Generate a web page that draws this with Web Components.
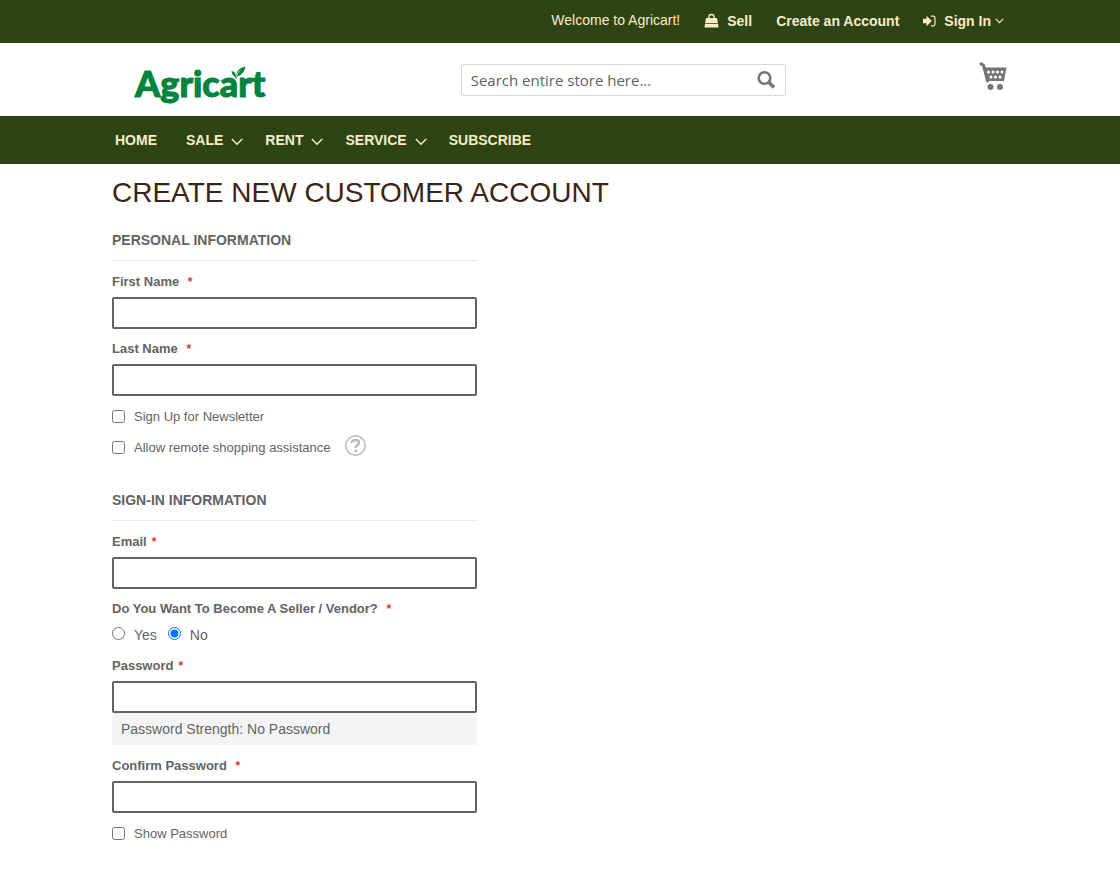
<!DOCTYPE html>
<html lang="en">

<head>
<meta charset="utf-8">
<title>Create New Customer Account</title>
<style>
    body {
        margin: 0;
        background: #fff;
        color: #636363;
        font: 14px/20px "Liberation Sans", Arial, sans-serif;
        --green: #2e4414;
        --cream: #f8ebc8;
        --side: 10%;
    }
</style>
</head>

<body>

    <top-bar>
        <top-link>Welcome to Agricart!</top-link>
        <top-link href="#sell" icon="bag">Sell</top-link>
        <top-link href="#create">Create an Account</top-link>
        <top-link href="#signin" icon="login" caret>Sign In</top-link>
    </top-bar>

    <store-header></store-header>

    <main-nav>
        <nav-item>HOME</nav-item>
        <nav-item menu>SALE</nav-item>
        <nav-item menu>RENT</nav-item>
        <nav-item menu>SERVICE</nav-item>
        <nav-item>SUBSCRIBE</nav-item>
    </main-nav>

    <account-page heading="CREATE NEW CUSTOMER ACCOUNT">
        <form-section heading="PERSONAL INFORMATION">
            <text-field label="First Name&nbsp;"></text-field>
            <text-field label="Last Name&nbsp;"></text-field>
            <check-field label="Sign Up for Newsletter"></check-field>
            <check-field label="Allow remote shopping assistance" help></check-field>
        </form-section>
        <form-section heading="SIGN-IN INFORMATION">
            <text-field label="Email" type="email"></text-field>
            <seller-choice></seller-choice>
            <text-field label="Password" type="password">
                <strength-meter>No Password</strength-meter>
            </text-field>
            <text-field label="Confirm Password&nbsp;" type="password"></text-field>
            <check-field label="Show Password"></check-field>
        </form-section>
    </account-page>

<script>

const ICONS = {
    bag: `<svg width="15" height="15" viewBox="0 0 15 15"><path d="M4.8 6.500V4.200a2.700 2.700 0 0 1 5.400 0V6.500" fill="none" stroke="currentColor" stroke-width="1.3"/><path d="M2 5h11l.9 5H1.1zM1 10.800h13l.5 3.700H.5z" fill="currentColor"/></svg>`,
    login: `<svg width="13" height="12" viewBox="0 0 13 12"><path d="M0 3.700h3.5V.8L8.800 6l-5.300 5.200V8.300H0z" fill="currentColor"/><path d="M8 1.2h2.2q1.8 0 1.8 1.8v6q0 1.8-1.8 1.8H8" fill="none" stroke="currentColor" stroke-width="1.2"/></svg>`
};

// Base class: renders the template once into an open shadow root
class BaseElement extends HTMLElement {
    constructor() {
        super();
        this.attachShadow({ mode: "open" });
    }

    connectedCallback() {
        this.shadowRoot.innerHTML = this.render();
    }

    attr(name) {
        return this.getAttribute(name) || "";
    }
}

class TopBar extends BaseElement {
    render() {
        return `
<style>
    :host {
        display: flex;
        justify-content: flex-end;
        align-items: center;
        gap: 24px;
        height: 41px;
        padding: 0 calc(var(--side) + 4px) 2px var(--side);
        background: var(--green);
        color: var(--cream);
    }
</style>
<slot></slot>`;
    }
}

class TopLink extends BaseElement {
    render() {
        const icon = ICONS[this.getAttribute("icon")] || "";
        const caret = this.hasAttribute("caret")
            ? `<svg class="caret" width="9" height="6" viewBox="0 0 9 6"><path d="M.7.8 4.5 4.6 8.3.8" fill="none" stroke="currentColor" stroke-width="1.2"/></svg>`
            : "";
        const tag = this.hasAttribute("href") ? `a href="${this.attr("href")}"` : "span";
        return `
<style>
    :host { display: block; white-space: nowrap; }
    a, span { display: flex; align-items: center; gap: 8px; color: inherit; text-decoration: none; }
    span { padding-bottom: 2px; }
    a { font-weight: bold; }
    .caret { margin-left: -4px; }
</style>
<${tag}>${icon}<slot></slot>${caret}</${tag.split(" ")[0]}>`;
    }
}

class StoreHeader extends BaseElement {
    render() {
        return `
<style>
    :host {
        display: flex;
        justify-content: space-between;
        align-items: center;
        height: 73px;
        padding: 0 var(--side);
    }
    .logo {
        position: relative;
        margin-left: 23px;
        padding: 6px 2px 0 0;
        color: #04843c;
        font: 900 36px/40px Lato, sans-serif;
        -webkit-text-stroke: 1px #04843c;
        text-decoration: none;
    }
    .leaf { position: absolute; left: 96px; top: 9px; }
    form {
        display: flex;
        align-items: center;
        box-sizing: border-box;
        width: 325px;
        height: 32px;
        padding: 0 9px;
        border: 1px solid #d8d8d8;
        border-radius: 2px;
    }
    input {
        flex: 1;
        min-width: 0;
        padding: 0;
        border: 0;
        outline: 0;
        font: 15px/20px "Open Sans", sans-serif;
    }
    input::placeholder { color: #5f5f5f; opacity: 1; }
    button { display: flex; padding: 0; border: 0; background: none; color: #757575; }
    .cart { display: flex; padding: 0 1px 6px 0; color: #757575; }
</style>
<a class="logo" href="#home">Agricart
    <svg class="leaf" width="16" height="14" viewBox="0 0 16 14"><path d="M.5 5q4 .5 4.500 5Q5.500 2 14.500.5 13 8.500 6.500 10.500L5 13Q4.500 11 2.500 9.500.800 8 .5 5z" fill="#04843c"/><path d="M5.200 11.500Q5.500 7.500 9 4.500" fill="none" stroke="#fff" stroke-width=".8"/></svg>
</a>
<form>
    <input type="text" aria-label="Search" placeholder="Search entire store here...">
    <button type="button" aria-label="Search">
        <svg width="20" height="20" viewBox="0 0 20 20"><circle cx="8.500" cy="8" r="5.800" fill="none" stroke="currentColor" stroke-width="2.600"/><path d="m12.500 12 5.500 5.500" stroke="currentColor" stroke-width="3.500"/></svg>
    </button>
</form>
<a class="cart" href="#cart" aria-label="My Cart">
    <svg width="28" height="29" viewBox="0 0 28 29">
        <path d="M2 1.900 4.500 3.400 8.500 19" fill="none" stroke="currentColor" stroke-width="3" stroke-linecap="round" stroke-linejoin="round"/>
        <path d="M5 5.500H27.500L25 19H8z" fill="currentColor"/>
        <g fill="#fff"><circle cx="9.500" cy="10" r="1.500"/><circle cx="14" cy="10" r="1.500"/><circle cx="18.500" cy="10" r="1.500"/><circle cx="23" cy="10" r="1.500"/><circle cx="12" cy="15" r="1.500"/><circle cx="16.500" cy="15" r="1.500"/><circle cx="21" cy="15" r="1.500"/></g>
        <g fill="currentColor"><circle cx="11.500" cy="25" r="3"/><circle cx="21" cy="25" r="3"/></g>
    </svg>
</a>`;
    }
}

class MainNav extends BaseElement {
    render() {
        return `
<style>
    :host { display: block; background: var(--green); color: #f3edc8; }
    nav {
        display: flex;
        align-items: center;
        gap: 29px;
        height: 48px;
        padding: 0 var(--side);
        margin-left: 3px;
    }
</style>
<nav><slot></slot></nav>`;
    }
}

class NavItem extends BaseElement {
    render() {
        const caret = this.hasAttribute("menu")
            ? `<svg width="12" height="8" viewBox="0 0 12 8"><path d="m.8 1 5.200 5.200L11.200 1" fill="none" stroke="currentColor" stroke-width="1.500"/></svg>`
            : "";
        return `
<style>
    :host { display: block; font-weight: bold; }
    a { display: flex; align-items: center; gap: 8px; color: inherit; text-decoration: none; }
    svg { margin: 3px -7px 0 0; }
</style>
<a href="#"><slot></slot>${caret}</a>`;
    }
}

class AccountPage extends BaseElement {
    render() {
        return `
<style>
    :host { display: block; padding: 14px var(--side) 32px; }
    h1 { margin: 0 0 22px; color: #3d2314; font-size: 28px; font-weight: normal; line-height: 30px; }
    form { display: flex; flex-direction: column; gap: 32px; max-width: 365px; }
</style>
<h1>${this.attr("heading")}</h1>
<form><slot></slot></form>`;
    }
}

class FormSection extends BaseElement {
    render() {
        return `
<style>
    :host { display: block; }
    h2 {
        margin: 0 0 11px;
        padding-bottom: 10px;
        border-bottom: 1px solid #ebebeb;
        font-size: 14px;
        line-height: 20px;
    }
    div { display: flex; flex-direction: column; gap: 10px; }
</style>
<h2>${this.attr("heading")}</h2>
<div><slot></slot></div>`;
    }
}

class TextField extends BaseElement {
    render() {
        return `
<style>
    :host { display: block; }
    label { display: block; margin-bottom: 5px; font-size: 13px; font-weight: bold; }
    label span { margin-left: 5px; color: #d9362f; font-size: 12px; }
    input {
        display: block;
        box-sizing: border-box;
        width: 100%;
        height: 32px;
        padding: 0 9px;
        border: 2px solid #636363;
        border-radius: 2px;
        font: inherit;
    }
</style>
<label for="field">${this.attr("label")}<span>*</span></label>
<input id="field" type="${this.getAttribute("type") || "text"}">
<slot></slot>`;
    }
}

class StrengthMeter extends BaseElement {
    render() {
        return `
<style>
    :host { display: block; padding: 6px 9px; background: #f4f4f4; border-bottom: 1px solid #fff; }
</style>
Password Strength: <slot></slot>`;
    }
}

class CheckField extends BaseElement {
    render() {
        const help = this.hasAttribute("help")
            ? `<svg width="21" height="21" viewBox="0 0 21 21"><circle cx="10.500" cy="10.500" r="9.700" fill="none" stroke="#bbb" stroke-width="1.500"/><path d="M6.700 8Q7 5 10.500 5q3.500 0 3.500 2.700 0 1.600-1.800 2.600-1.500.9-1.500 2.700" fill="none" stroke="#bbb" stroke-width="2.400"/><path d="M9.400 14.500h2.600V17H9.400z" fill="#bbb"/></svg>`
            : "";
        return `
<style>
    :host { display: flex; align-items: center; height: 21px; font-size: 13px; }
    input { width: 13px; height: 13px; margin: 0 9px 0 0; }
    svg { margin: 0 0 4px 14px; }
</style>
<input id="check" type="checkbox">
<label for="check">${this.attr("label")}</label>${help}`;
    }
}

class SellerChoice extends BaseElement {
    render() {
        return `
<style>
    :host { display: block; }
    fieldset { margin: 0; padding: 0; border: 0; }
    legend { margin-bottom: 5px; padding: 0; font-size: 13px; font-weight: bold; }
    legend span { margin-left: 5px; color: #d9362f; font-size: 12px; }
    .row { display: flex; gap: 11px; height: 22px; }
    label { display: flex; gap: 9px; line-height: 22px; }
    input { width: 13px; height: 13px; margin: 3px 0 0; }
</style>
<fieldset>
    <legend>Do You Want To Become A Seller / Vendor?&nbsp;<span>*</span></legend>
    <div class="row">
        <label><input type="radio" name="seller">Yes</label>
        <label><input type="radio" name="seller" checked>No</label>
    </div>
</fieldset>`;
    }
}

customElements.define("top-bar", TopBar);
customElements.define("top-link", TopLink);
customElements.define("store-header", StoreHeader);
customElements.define("main-nav", MainNav);
customElements.define("nav-item", NavItem);
customElements.define("account-page", AccountPage);
customElements.define("form-section", FormSection);
customElements.define("text-field", TextField);
customElements.define("strength-meter", StrengthMeter);
customElements.define("check-field", CheckField);
customElements.define("seller-choice", SellerChoice);

</script>

</body>

</html>
